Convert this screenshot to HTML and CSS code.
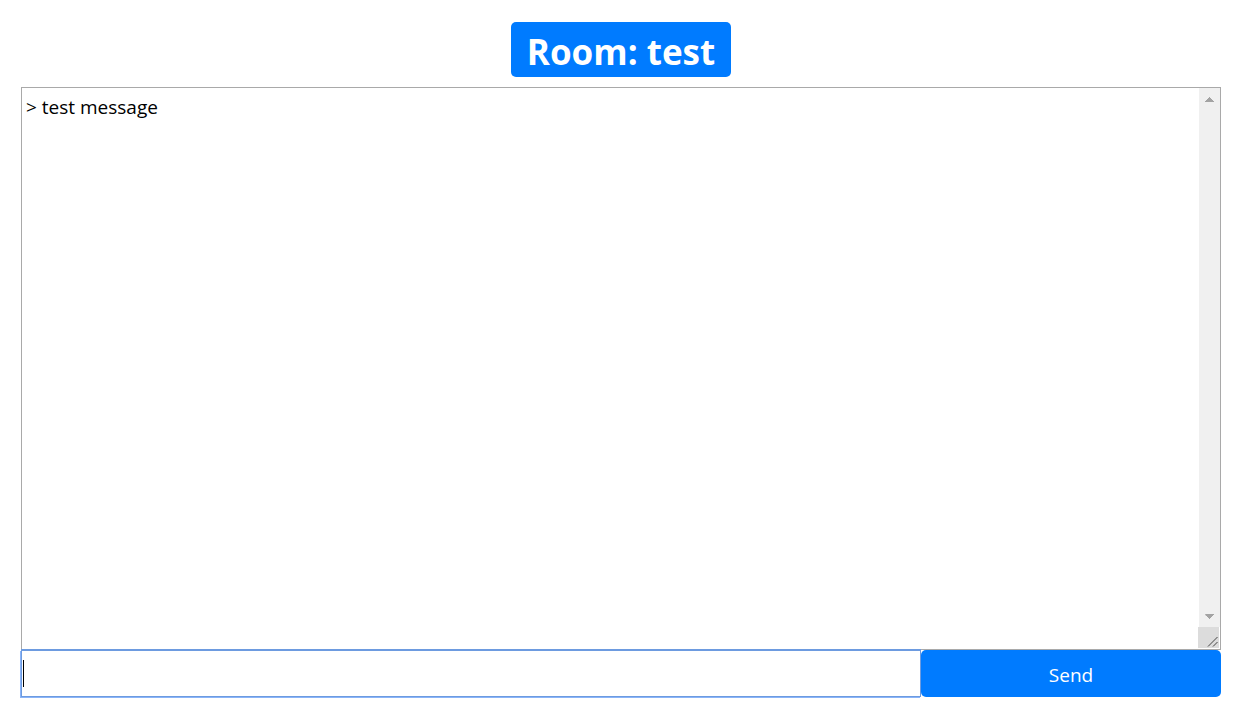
FILE: index.html
```html
<!DOCTYPE html>
<html lang="en">
<head>
<meta charset="utf-8">
<title>Room: test</title>
<link rel="stylesheet" href="styles.css">
</head>
<body>
<main class="chat">
  <h1 class="room">Room: test</h1>
  <div class="log">
    <textarea class="log-text" aria-label="Messages" readonly>&gt; test message</textarea>
    <div class="scrollbar" aria-hidden="true">
      <svg class="arrow" viewBox="0 0 22 24"><path d="M7 14h9v-1h-1v-1h-1v-1h-1v-1h-1v-1h-1v1h-1v1h-1v1h-1v1h-1z"/></svg>
      <svg class="arrow" viewBox="0 0 22 24"><path d="M7 11h9v1h-1v1h-1v1h-1v1h-1v1h-1v-1h-1v-1h-1v-1h-1z"/></svg>
      <svg class="grip" viewBox="0 0 21 21"><path d="M10 19.500L19.500 10M15 19.500L19.500 15"/></svg>
    </div>
  </div>
  <form class="composer">
    <div class="field">
      <input class="message" type="text" aria-label="Message">
      <span class="caret"></span>
    </div>
    <button class="send" type="button">Send</button>
  </form>
</main>
</body>
</html>
```
FILE: styles.css
```css
* {
  box-sizing: border-box;
}

body {
  margin: 0;
  background: #fff;
  color: #000;
  font-family: "Segoe UI", "Open Sans", "Noto Sans", sans-serif;
  font-size: 19px;
}

.chat {
  display: flex;
  flex-direction: column;
  min-height: 100vh;
  padding: 22px 33px 23px 21px;
}

.room {
  align-self: center;
  margin: 0 0 10px;
  padding: 10px 16px 5px;
  border-radius: 5px;
  background: #007bff;
  color: #fff;
  font-size: 35px;
  font-weight: 700;
  line-height: 40px;
}

.log {
  display: flex;
  flex: 1;
  border: 1px solid #a9a9a9;
}

.log-text {
  flex: 1;
  min-width: 0;
  padding: 4px;
  border: 0;
  outline: 0;
  resize: none;
  overflow: hidden;
  background: #fff;
  color: inherit;
  font: inherit;
  line-height: 30px;
}

.scrollbar {
  display: flex;
  flex-direction: column;
  width: 22px;
  margin-bottom: 1px;
  background: linear-gradient(#f0f0f0, #f0f0f0) right / 21px 100% no-repeat;
}

.arrow {
  width: 22px;
  height: 24px;
  fill: #a3a3a3;
}

.arrow + .arrow {
  margin-top: auto;
}

.grip {
  width: 21px;
  height: 21px;
  background: #dcdcdc;
  box-shadow: 1px 0 0 #fff;
  fill: none;
  stroke: #444;
}

.composer {
  display: grid;
  grid-template-columns: 3fr 1fr;
  height: 47px;
}

.field {
  position: relative;
  display: flex;
}

.message {
  width: 100%;
  padding: 2px;
  border: 1px solid #6d9be0;
  outline: 0;
  box-shadow: -1px 1px 0 #8ab4f8, 0 -1px 0 #6d9be0;
  background: #fff;
  font: inherit;
}

.caret {
  position: absolute;
  top: 10px;
  left: 2px;
  width: 1px;
  height: 27px;
  background: #000;
}

.send {
  padding: 3px 6px 0;
  border: 0;
  border-radius: 5px;
  background: #007bff;
  color: #fff;
  font: inherit;
}
```
